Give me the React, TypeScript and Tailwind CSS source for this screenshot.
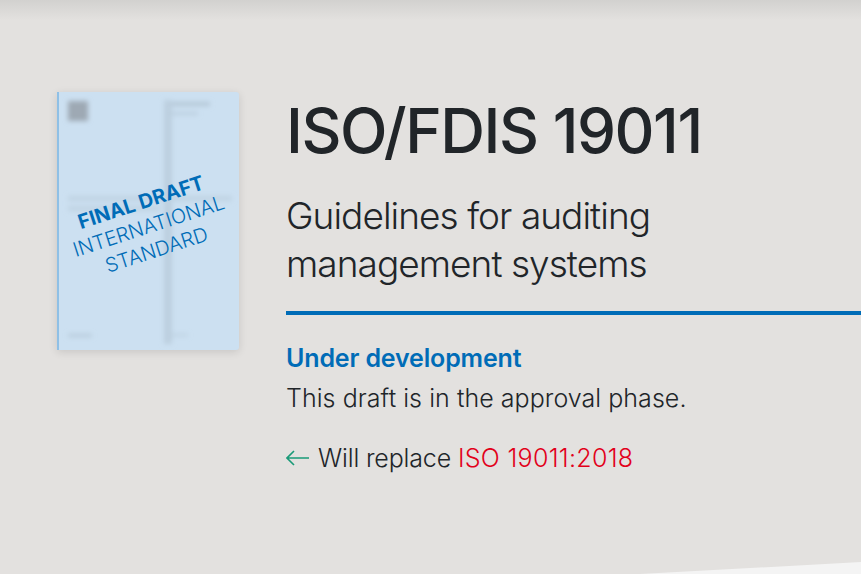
const Cover = () => (
  <div className="grid h-[258px] w-[182px] shrink-0 place-items-center overflow-hidden rounded-r-[3px] border-l-2 border-[#8fc0e6] bg-[#cce0f1] shadow-[0_2px_8px_rgba(0,0,0,0.12)]">
    {/* blurred page of the standard behind the stamp */}
    <svg className="col-start-1 row-start-1" width="180" height="258" viewBox="0 0 180 258">
      <defs>
        <filter id="soft" x="-20%" y="-20%" width="140%" height="140%">
          <feGaussianBlur stdDeviation="2.6" />
        </filter>
      </defs>
      <g filter="url(#soft)">
        <rect x="9" y="9" width="20" height="20" fill="#9ea9b4" />
        <rect x="105" y="8" width="8" height="244" fill="#bccfdf" />
        <rect x="113" y="10" width="38" height="4" fill="#b4c6d5" />
        <rect x="113" y="20" width="26" height="3" fill="#bacddd" />
        <rect x="9" y="104" width="164" height="5" fill="#c0d3e3" />
        <rect x="9" y="114" width="92" height="5" fill="#c0d3e3" />
        <rect x="9" y="242" width="24" height="3" fill="#b6c9d9" />
        <rect x="113" y="242" width="16" height="2" fill="#bacddd" />
      </g>
    </svg>
    <div className="col-start-1 row-start-1 flex translate-y-[5px] -rotate-[18deg] flex-col items-center text-[20px] leading-[25px] text-[#006cb7]">
      <span className="font-bold">FINAL DRAFT</span>
      <span className="font-light">INTERNATIONAL</span>
      <span className="font-light">STANDARD</span>
    </div>
  </div>
);

export default function App() {
  return (
    <div className="relative h-[574px] w-[861px] overflow-hidden bg-[#e3e1df] font-['Inter',sans-serif] text-[#212529]">
      <div className="absolute inset-x-0 top-0 h-[20px] bg-gradient-to-b from-[#d2d1cf] to-[#e3e1df]" />
      <svg className="absolute bottom-0 right-0" width="221" height="12" viewBox="0 0 221 12">
        <polygon points="0,12 221,0 221,12" fill="#f4f4f4" />
      </svg>

      <main className="relative flex gap-[47px] pl-[57px] pt-[92px]">
        <Cover />
        <div className="min-w-0 flex-1">
          <h1 className="mt-[3px] text-[62px] font-medium leading-[72px] tracking-[-1.45px]">ISO/FDIS 19011</h1>
          <h2 className="mt-[25px] text-[37px] font-light leading-[48px] tracking-[-0.95px]">
            Guidelines for auditing
            <br />
            management systems
          </h2>
          <div className="mt-[23px] h-[4px] bg-[#006cb7]" />
          <p className="mt-[27px] text-[25px] font-semibold leading-[32px] tracking-[-0.15px] text-[#006cb7]">Under development</p>
          <p className="mt-[8px] text-[25px] font-light leading-[32px] tracking-[0.05px]">This draft is in the approval phase.</p>
          <p className="mt-[28px] flex items-center text-[25px] font-light leading-[32px]">
            <svg className="mr-[9px]" width="23" height="16" viewBox="0 0 23 16" fill="none" stroke="#1a9a78" strokeWidth="1.6">
              <path d="M23 8H1M8 1L1 8l7 7" />
            </svg>
            <span className="whitespace-pre tracking-[-0.15px]">Will replace </span>
            <span className="tracking-[0.3px] text-[#e2001a]">ISO 19011:2018</span>
          </p>
        </div>
      </main>
    </div>
  );
}
